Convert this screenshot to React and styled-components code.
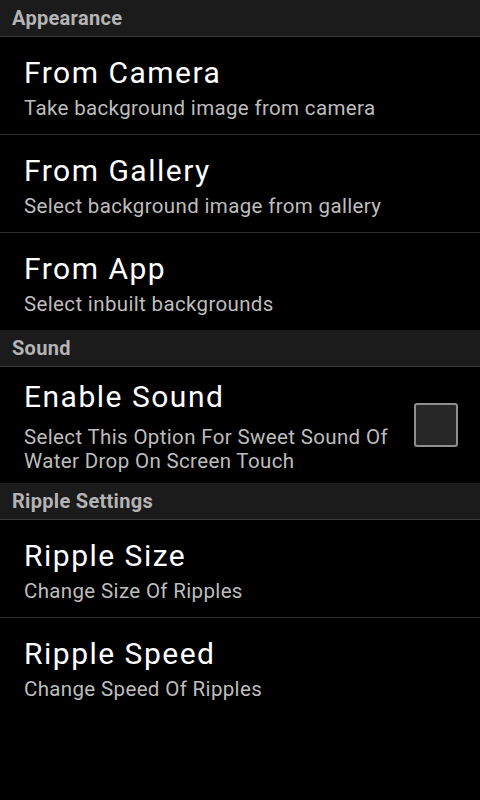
import React from "react";
import styled, { createGlobalStyle } from "styled-components";

const Global = createGlobalStyle`
  html, body { margin: 0; padding: 0; background: #000; }
  body { font-family: Roboto, "Noto Sans", sans-serif; }
`;

const Screen = styled.div`
  width: 480px;
  height: 800px;
  background: #000;
  display: flex;
  flex-direction: column;
  overflow: hidden;
`;

const Header = styled.div`
  height: 36px;
  background: #1b1b1b;
  border-bottom: 1px solid #3a3a3a;
  display: flex;
  align-items: center;
  padding-left: 12px;
  color: #b4b4b4;
  font-size: 20px;
  letter-spacing: 0.3px;
  font-weight: 700;
`;

const Item = styled.div`
  height: ${(p) => p.$h || 97}px;
  flex-shrink: 0;
  box-sizing: content-box;
  display: flex;
  align-items: center;
  padding: 0 22px 0 24px;
  border-bottom: ${(p) => (p.$last ? "none" : "1px solid #2c2c2c")};
`;

const Texts = styled.div`
  flex: 1;
  display: flex;
  flex-direction: column;
  padding-top: ${(p) => p.$pt}px;
`;

const Title = styled.div`
  color: #fff;
  font-size: 30px;
  letter-spacing: 1.5px;
  line-height: 38px;
`;

const Summary = styled.div`
  color: #bdbdbd;
  font-size: 20.5px;
  letter-spacing: 0.35px;
  line-height: 24px;
  margin-top: ${(p) => p.$gap}px;
`;

const Check = styled.div`
  width: 40px;
  height: 40px;
  border: 2.5px solid #8e8e8e;
  border-radius: 3px;
  background: #262626;
  margin-left: 20px;
  flex-shrink: 0;
`;

const groups = [
  {
    name: "Appearance",
    items: [
      { t: "From Camera", s: "Take background image from camera" },
      { t: "From Gallery", s: "Select background image from gallery" },
      { t: "From App", s: "Select inbuilt backgrounds" },
    ],
  },
  {
    name: "Sound",
    items: [
      {
        t: "Enable Sound",
        s: "Select This Option For Sweet Sound Of Water Drop On Screen Touch",
        check: true,
        h: 116,
        gap: 9,
        pt: 0,
      },
    ],
  },
  {
    name: "Ripple Settings",
    items: [
      { t: "Ripple Size", s: "Change Size Of Ripples" },
      { t: "Ripple Speed", s: "Change Speed Of Ripples" },
    ],
  },
];

export default function App() {
  return (
    <Screen>
      <Global />
      {groups.map((g) => (
        <React.Fragment key={g.name}>
          <Header>{g.name}</Header>
          {g.items.map((it, i) => (
            <Item key={it.t} $h={it.h} $last={i === g.items.length - 1}>
              <Texts $pt={it.pt ?? 2}>
                <Title>{it.t}</Title>
                <Summary $gap={it.gap ?? 4}>{it.s}</Summary>
              </Texts>
              {it.check && <Check />}
            </Item>
          ))}
        </React.Fragment>
      ))}
    </Screen>
  );
}
